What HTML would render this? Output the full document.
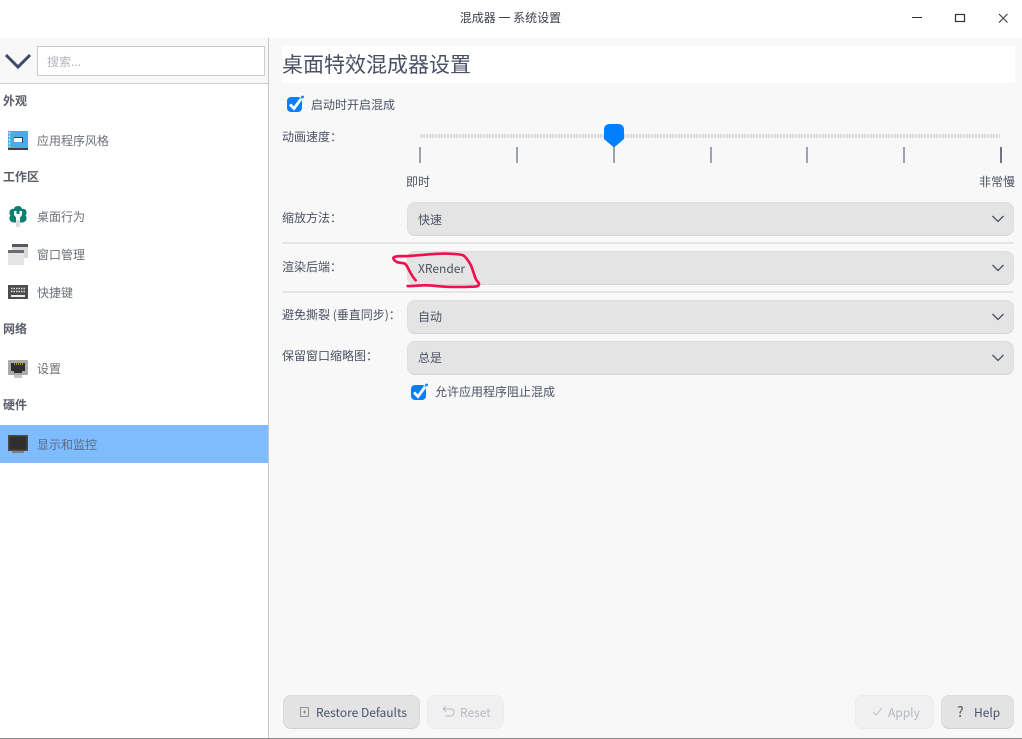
<!DOCTYPE html>
<html><head><meta charset="utf-8"><style>
*{box-sizing:border-box}
html,body{margin:0;padding:0;width:1022px;height:739px;overflow:hidden;background:#f8f8f8;font-family:"Noto Sans CJK SC","Liberation Sans",sans-serif;font-size:12px;color:#4d5263}
.a{position:absolute;white-space:nowrap;line-height:16px}
.head{font-weight:700;color:#5b5e68;left:3px}
.item{left:37px;color:#6d7079}
.combo{position:absolute;left:407px;width:607px;height:34px;background:#e4e4e4;border:1px solid #dedede;border-bottom:1px solid #d4d4d4;border-radius:8px}
.combo span{position:absolute;left:10px;top:9px;line-height:16px;color:#4d5263}
.combo svg{position:absolute;right:9px;top:12px}
.sep{position:absolute;left:282px;width:732px;height:2px;background:#e5e5e5}
.tick{position:absolute;top:147px;width:2px;height:16px;background:#9da2b3}
.btn{position:absolute;top:695px;height:34px;border-radius:8px;background:#e3e3e3;border:1px solid #dcdcdc;border-bottom-color:#d0d0d0;line-height:33px;color:#4a5270}
.btn.dis{background:#f0f0f0;border-color:#ececec;color:#b5b8c2}
.cb{position:absolute;width:15px;height:15px;background:#0a7ff5;border-radius:4px}
</style></head><body>
<div class="a" style="left:0;top:0;width:1022px;height:38px;background:#fff"></div>
<div class="a" style="left:0;top:10px;width:1021px;text-align:center;color:#3c3f48">混成器 一 系统设置</div>
<svg class="a" style="left:880px;top:0" width="142" height="38" fill="none"><path d="M32 17.500H42" stroke="#333" stroke-width="1"/><rect x="75.500" y="14.500" width="9" height="7" stroke="#333" stroke-width="1.200"/><path d="M119 14L127.500 22.500M127.500 14L119 22.500" stroke="#444" stroke-width="1.200"/></svg>

<div class="a" style="left:0;top:38px;width:268px;height:46px;background:#f8f8f8;border-bottom:1px solid #cbccd2"></div>
<div class="a" style="left:0;top:84px;width:268px;height:655px;background:#fff"></div>
<div class="a" style="left:268px;top:38px;width:1px;height:701px;background:#c3c5cf"></div>
<svg class="a" style="left:4px;top:52px" width="28" height="18" fill="none"><path d="M2 3L14 15L26 3" stroke="#3e4a63" stroke-width="3"/></svg>
<div class="a" style="left:37px;top:46px;width:228px;height:30px;background:#fff;border:1px solid #cdcdcd;padding:7px 9px 0;color:#b4b6bd">搜索...</div>

<div class="a head" style="top:93px">外观</div>
<svg class="a" style="left:8px;top:131px" width="20" height="19"><rect width="20" height="17" fill="#46ade5"/><rect y="17" width="20" height="2" fill="#3f4347"/><rect x="6" y="6" width="8" height="5" fill="#fff"/><rect x="6" y="6" width="8" height="1" fill="#33404d"/><rect x="14" y="6" width="1" height="6" fill="#33404d"/><path d="M1.500 1V16" stroke="#d5eefb" stroke-width="1.500" stroke-dasharray="2 1.500"/></svg>
<div class="a item" style="top:133px">应用程序风格</div>
<div class="a head" style="top:169px">工作区</div>
<svg class="a" style="left:8px;top:205px" width="20" height="23"><path d="M10 1C12.500 1 14 2.500 14 4C16 3 19 5 18.500 8C18.400 9.500 18 10 17.500 10.500C19 12 19 15 17 16.500C15.500 17.500 14.500 17.500 13 17.500L7 17.500C5.500 17.500 4.500 17.500 3 16.500C1 15 1 12 2.500 10.500C2 10 1.600 9.500 1.500 8C1 5 4 3 6 4C6 2.500 7.500 1 10 1Z" fill="#0d7e70"/><path d="M6 6H8.500V9H11.500V6H14V10L12 12.500V18H8V12.500L6 10Z" fill="#fff"/><rect x="8" y="15" width="4" height="7" rx="1" fill="#dcdcdc"/></svg>
<div class="a item" style="top:209px">桌面行为</div>
<svg class="a" style="left:8px;top:244px" width="20" height="21"><rect x="4" y="0" width="16" height="14" fill="#d9d9d9"/><rect x="4" y="0" width="16" height="3" fill="#55585f"/><rect x="0" y="6" width="16" height="15" fill="#e4e4e4"/><rect x="0" y="6" width="16" height="3" fill="#686b72"/></svg>
<div class="a item" style="top:247px">窗口管理</div>
<svg class="a" style="left:8px;top:285px" width="20" height="15"><rect width="20" height="14" fill="#4d4d4d"/><path d="M3 3.500H17M3 6.500H17" stroke="#ddd" stroke-width="1.500" stroke-dasharray="1.500 1"/><rect x="3" y="10" width="14" height="2" fill="#eee"/></svg>
<div class="a item" style="top:285px">快捷键</div>
<div class="a head" style="top:321px">网络</div>
<svg class="a" style="left:8px;top:360px" width="20" height="18"><rect width="20" height="15" rx="1" fill="#a9a9a9"/><rect x="6" y="15" width="8" height="3" fill="#c4c4c4"/><path d="M3 3H17V11H14V13H6V11H3Z" fill="#2f2f2f"/><path d="M6 4H15" stroke="#e9a92f" stroke-width="1.500" stroke-dasharray="1 1"/></svg>
<div class="a item" style="top:361px">设置</div>
<div class="a head" style="top:397px">硬件</div>
<div class="a" style="left:0;top:425px;width:268px;height:38px;background:#7ebcff"></div>
<svg class="a" style="left:8px;top:435px" width="20" height="19"><rect width="20" height="16" fill="#4a4a4a"/><rect x="1.500" y="1.500" width="17" height="13" fill="#2f2f2f"/><rect x="4" y="16" width="12" height="2" fill="#7d7d7d"/></svg>
<div class="a" style="left:37px;top:437px;color:#5a6b85">显示和监控</div>

<div class="a" style="left:282px;top:46px;width:733px;height:37px;background:#fff"></div>
<div class="a" style="left:282px;top:48px;font-size:21px;line-height:32px;color:#4a5064">桌面特效混成器设置</div>

<div class="cb" style="left:287px;top:97px"></div>
<svg class="a" style="left:287px;top:95px" width="18" height="18" fill="none"><path d="M3 9.500L7 13.500L14 4" stroke="#fff" stroke-width="2.800"/><circle cx="15.500" cy="2" r="1.400" fill="#0a7ff5"/></svg>
<div class="a" style="left:311px;top:97px">启动时开启混成</div>

<div class="a" style="left:282px;top:129px">动画速度：</div>
<div class="a" style="left:420px;top:134px;width:580px;height:4px;background:repeating-linear-gradient(90deg,#dcdcdc 0 2px,#f3f3f3 2px 3px)"></div>
<svg class="a" style="left:604px;top:124px" width="20" height="24"><path d="M6 0H14Q20 0 20 6V15L10 23.500L0 15V6Q0 0 6 0Z" fill="#0080ff"/></svg>
<div class="tick" style="left:419px"></div>
<div class="tick" style="left:516px"></div>
<div class="tick" style="left:613px"></div>
<div class="tick" style="left:710px"></div>
<div class="tick" style="left:806px"></div>
<div class="tick" style="left:903px"></div>
<div class="tick" style="left:1000px;background:#6f7488"></div>
<div class="a" style="left:406px;top:174px">即时</div>
<div class="a" style="left:979px;top:174px">非常慢</div>

<div class="a" style="left:282px;top:210px">缩放方法：</div>
<div class="combo" style="top:202px"><span>快速</span><svg width="12" height="8" fill="none"><path d="M.5 1L6 6.500L11.500 1" stroke="#4a5068" stroke-width="1.300"/></svg></div>
<div class="sep" style="top:242px"></div>
<div class="a" style="left:282px;top:259px">渲染后端：</div>
<div class="combo" style="top:251px"><span>XRender</span><svg width="12" height="8" fill="none"><path d="M.5 1L6 6.500L11.500 1" stroke="#4a5068" stroke-width="1.300"/></svg></div>
<div class="sep" style="top:291px"></div>
<div class="a" style="left:282px;top:307px">避免撕裂 (垂直同步)：</div>
<div class="combo" style="top:300px"><span style="top:8px">自动</span><svg width="12" height="8" fill="none"><path d="M.5 1L6 6.500L11.500 1" stroke="#4a5068" stroke-width="1.300"/></svg></div>
<div class="a" style="left:282px;top:348px">保留窗口缩略图：</div>
<div class="combo" style="top:341px"><span style="top:8px">总是</span><svg width="12" height="8" fill="none"><path d="M.5 1L6 6.500L11.500 1" stroke="#4a5068" stroke-width="1.300"/></svg></div>
<div class="cb" style="left:411px;top:385px"></div>
<svg class="a" style="left:411px;top:383px" width="18" height="18" fill="none"><path d="M3 9.500L7 13.500L14 4" stroke="#fff" stroke-width="2.800"/><circle cx="15.500" cy="2" r="1.400" fill="#0a7ff5"/></svg>
<div class="a" style="left:435px;top:384px">允许应用程序阻止混成</div>

<svg class="a" style="left:385px;top:242px" width="110" height="56" viewBox="0 0 330 168" fill="none"><path d="M92 115C85 108 80 98 75 90C70 80 66 70 60 65C52 62 42 63 35 60C30 56 24 52 25 48C27 42 45 42 70 42C90 41 105 39 120 38C145 36 170 34 190 35C210 36 225 36 235 40C246 48 252 60 258 70C264 85 268 100 272 110C275 118 283 122 282 127C281 133 275 134 260 134C235 135 205 135 180 134C160 133 140 130 120 130C100 130 85 133 68 132" stroke="#f0104f" stroke-width="8" stroke-linecap="round" stroke-linejoin="round"/></svg>

<div class="btn" style="left:283px;width:137px"><svg class="a" style="left:16px;top:10px" width="12" height="14" fill="none"><rect x=".500" y="1.500" width="8" height="9" stroke="#7d808a" stroke-width=".8"/><path d="M3 6H6M4.500 4.500V7.500" stroke="#6a6d78" stroke-width=".8"/></svg><span style="position:absolute;left:32px">Restore Defaults</span></div>
<div class="btn dis" style="left:427px;width:77px"><svg class="a" style="left:14px;top:9px" width="15" height="14" fill="none"><path d="M1 4H9C13 4 13 11 9 11H3M1 4L4 1M1 4L4 6.500" stroke="#b5b8c2"/></svg><span style="position:absolute;left:32px">Reset</span></div>
<div class="btn dis" style="left:855px;width:79px"><svg class="a" style="left:16px;top:11px" width="12" height="10" fill="none"><path d="M1 5L4 8L10 1" stroke="#c0c2ca"/></svg><span style="position:absolute;left:32px">Apply</span></div>
<div class="btn" style="left:941px;width:73px"><span style="position:absolute;left:15px;color:#55585f;font-size:14px">?</span><span style="position:absolute;left:32px">Help</span></div>
<div class="a" style="left:0;top:738px;width:1022px;height:1px;background:#8a8a8a"></div>
</body></html>
